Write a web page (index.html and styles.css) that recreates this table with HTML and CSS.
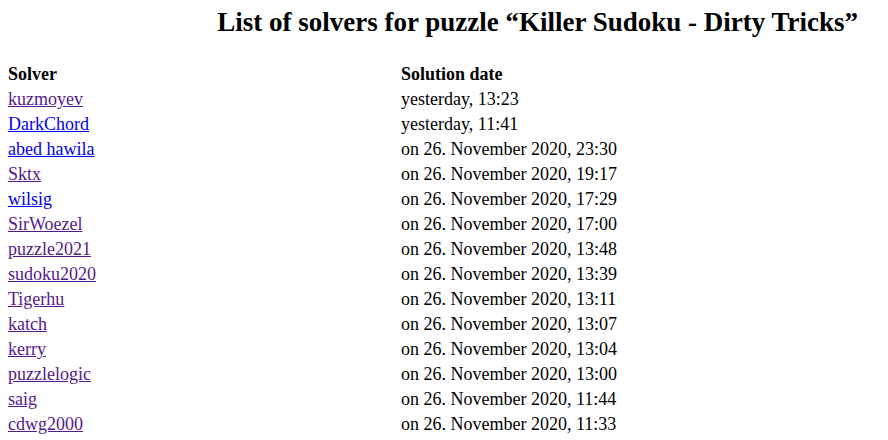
FILE: index.html
```html
<!DOCTYPE html>
<html>
<head>
<meta charset="utf-8">
<link rel="stylesheet" href="styles.css">
</head>
<body>
<h1 class="title">List of solvers for puzzle “Killer Sudoku - Dirty Tricks”</h1>
<div class="solvers">
  <div class="head">Solver</div><div class="head">Solution date</div>
  <div><a class="visited" href="#">kuzmoyev</a></div><div>yesterday, 13:23</div>
  <div><a class="link" href="#">DarkChord</a></div><div>yesterday, 11:41</div>
  <div><a class="link" href="#">abed hawila</a></div><div>on 26. November 2020, 23:30</div>
  <div><a class="visited" href="#">Sktx</a></div><div>on 26. November 2020, 19:17</div>
  <div><a class="link" href="#">wilsig</a></div><div>on 26. November 2020, 17:29</div>
  <div><a class="visited" href="#">SirWoezel</a></div><div>on 26. November 2020, 17:00</div>
  <div><a class="visited" href="#">puzzle2021</a></div><div>on 26. November 2020, 13:48</div>
  <div><a class="visited" href="#">sudoku2020</a></div><div>on 26. November 2020, 13:39</div>
  <div><a class="visited" href="#">Tigerhu</a></div><div>on 26. November 2020, 13:11</div>
  <div><a class="visited" href="#">katch</a></div><div>on 26. November 2020, 13:07</div>
  <div><a class="visited" href="#">kerry</a></div><div>on 26. November 2020, 13:04</div>
  <div><a class="visited" href="#">puzzlelogic</a></div><div>on 26. November 2020, 13:00</div>
  <div><a class="visited" href="#">saig</a></div><div>on 26. November 2020, 11:44</div>
  <div><a class="visited" href="#">cdwg2000</a></div><div>on 26. November 2020, 11:33</div>
</div>
</body>
</html>
```
FILE: styles.css
```css
body {
  margin: 8px;
  font-family: "Liberation Serif", "Times New Roman", serif;
  font-size: 18px;
  color: #000;
  background: #fff;
}
.title {
  font-size: 27px;
  font-weight: bold;
  margin: 0;
  padding-right: 22px;
  text-align: right;
  line-height: 28px;
}
.solvers {
  margin-top: 26px;
  display: grid;
  grid-template-columns: 393px 1fr;
  line-height: 25px;
}
.head {
  font-weight: bold;
}
.link { color: #0000ee; }
.visited { color: #551a8b; }
```
